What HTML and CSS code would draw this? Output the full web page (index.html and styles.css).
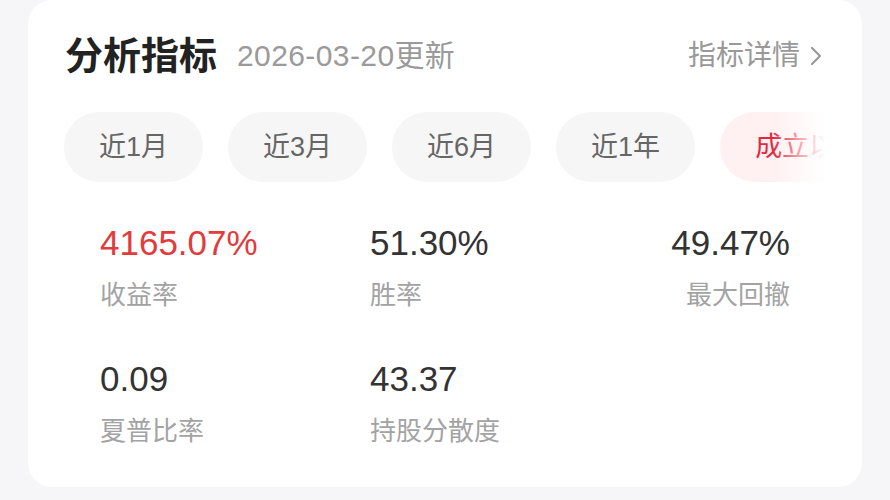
FILE: index.html
```html
<!DOCTYPE html>
<html lang="zh-CN">
<head>
<meta charset="utf-8">
<title>分析指标</title>
<link rel="stylesheet" href="styles.css">
</head>
<body>
<div class="page">
  <section class="card">
    <header class="head">
      <div class="head-left">
        <h2 class="title">分析指标</h2>
        <span class="date">2026-03-20更新</span>
      </div>
      <a class="more">指标详情
        <svg class="chev" width="12" height="20" viewBox="0 0 12 20"><polyline points="2,2 10,10 2,18" fill="none" stroke="#999" stroke-width="2.2" stroke-linecap="round" stroke-linejoin="round"/></svg>
      </a>
    </header>
    <div class="tabs-wrap">
      <div class="tabs">
        <span class="tab">近1月</span>
        <span class="tab">近3月</span>
        <span class="tab">近6月</span>
        <span class="tab">近1年</span>
        <span class="tab active">成立以来</span>
      </div>
      <div class="fade"></div>
    </div>
    <div class="metrics">
      <div class="metric">
        <div class="val red">4165.07%</div>
        <div class="lbl">收益率</div>
      </div>
      <div class="metric">
        <div class="val">51.30%</div>
        <div class="lbl">胜率</div>
      </div>
      <div class="metric right">
        <div class="val">49.47%</div>
        <div class="lbl">最大回撤</div>
      </div>
      <div class="metric">
        <div class="val">0.09</div>
        <div class="lbl">夏普比率</div>
      </div>
      <div class="metric">
        <div class="val">43.37</div>
        <div class="lbl">持股分散度</div>
      </div>
    </div>
  </section>
</div>
</body>
</html>
```
FILE: styles.css
```css
* { box-sizing: border-box; }
html, body {
  margin: 0;
  padding: 0;
  background: #f6f6f8;
  font-family: "Liberation Sans", "Noto Sans CJK SC", sans-serif;
}
.page {
  width: 890px;
  height: 500px;
  padding: 0 28px;
  overflow: hidden;
}
.card {
  width: 834px;
  height: 487px;
  background: #ffffff;
  border-radius: 24px;
  padding: 32px 40px 0 37px;
}
.head {
  display: flex;
  align-items: center;
  justify-content: space-between;
  height: 48px;
}
.head-left {
  display: flex;
  align-items: center;
  gap: 20px;
}
.title {
  margin: 0;
  font-size: 38px;
  font-weight: bold;
  color: #222222;
  line-height: 48px;
}
.date {
  font-size: 30px;
  letter-spacing: 0.4px;
  color: #9a9a9a;
  line-height: 48px;
}
.more {
  display: flex;
  align-items: center;
  gap: 10px;
  font-size: 28px;
  color: #999999;
  line-height: 48px;
}
.chev { display: block; }
.tabs-wrap {
  position: relative;
  margin-top: 32px;
  margin-left: -1px;
  margin-right: -13px;
  overflow: hidden;
}
.tabs {
  display: flex;
  gap: 25px;
  white-space: nowrap;
}
.tab {
  flex: none;
  height: 70px;
  line-height: 70px;
  padding: 0 35px;
  border-radius: 35px;
  background: #f6f6f6;
  color: #666666;
  font-size: 27px;
}
.tab.active {
  background: #fff0f1;
  color: #e3283e;
}
.fade {
  position: absolute;
  top: 0;
  right: 0;
  width: 62px;
  height: 70px;
  background: linear-gradient(to right, rgba(255,255,255,0) 0%, rgba(255,255,255,0.55) 40%, #ffffff 85%);
}
.metrics {
  display: grid;
  grid-template-columns: 270px 1fr auto;
  row-gap: 44px;
  margin-top: 39px;
  margin-left: 35px;
  margin-right: 32px;
}
.metric.right { text-align: right; }
.val {
  font-size: 35px;
  line-height: 44px;
  color: #333333;
}
.val.red { color: #e23b3b; }
.lbl {
  margin-top: 12px;
  font-size: 26px;
  line-height: 36px;
  color: #a3a3a3;
}
```
